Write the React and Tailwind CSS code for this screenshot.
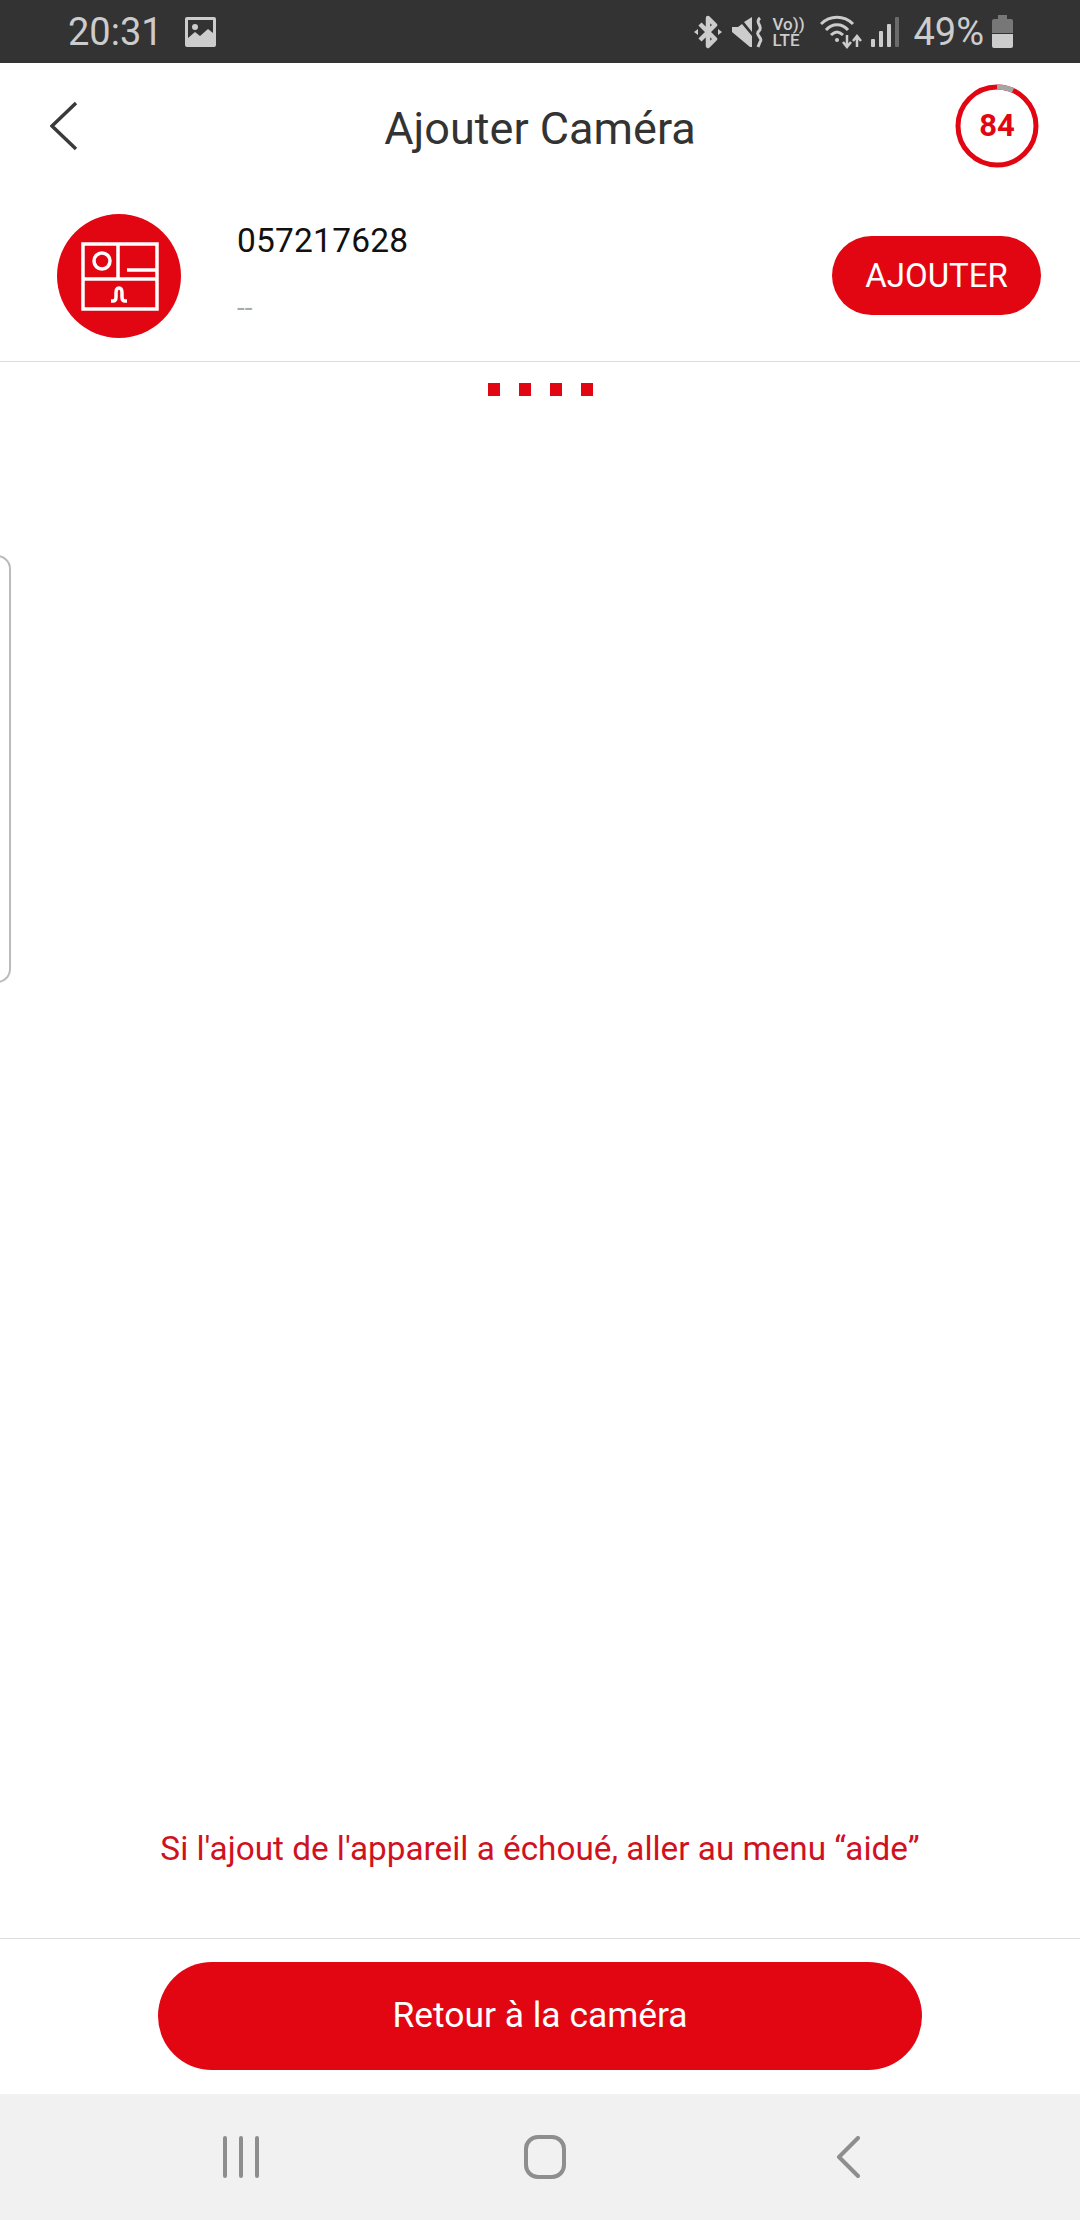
import React from "react";

const StatusIcons = () => (
  <div className="flex items-center text-[#cccccc]">
    {/* bluetooth */}
    <svg width="30" height="34" viewBox="0 0 30 34" fill="none" stroke="#cccccc" strokeWidth="4.5" className="mr-[9px]">
      <path d="M7 9 L22 24 L15 31 V3 L22 10 L7 25" strokeLinejoin="round" />
      <path d="M1 17 L5 14 V20 Z M29 17 L25 14 V20 Z" fill="#cccccc" stroke="none" />
    </svg>
    {/* mute / vibrate */}
    <svg width="32" height="32" viewBox="0 0 32 32" fill="none" className="mr-[8px]">
      <path d="M0 11 H6 L10 8 L20 20 V31 L18 31 L0 16 Z M12 6 L20 1 V16 Z" fill="#cccccc" />
      <path d="M28 2 C22 7 32 10 27 15 C22 19 32 22 28 26 L26 31" stroke="#cccccc" strokeWidth="3" />
    </svg>
    {/* volte */}
    <div className="w-[33px] h-[32px] mr-[15px] flex flex-col items-start font-['Roboto',sans-serif] font-medium text-[17px] leading-[16px]">
      <span>Vo))</span>
      <span>LTE</span>
    </div>
    {/* wifi */}
    <svg width="42" height="34" viewBox="0 0 42 34" fill="none" stroke="#cccccc" strokeWidth="3" className="mr-[9px]">
      <path d="M1 9 C10 0 24 0 33 9" />
      <path d="M6 15 C12 8 22 8 28 15" />
      <path d="M11 20 C15 16 19 16 23 20" />
      <circle cx="17" cy="25" r="2" fill="#cccccc" stroke="none" />
      <path d="M27 20 V31 M23 27 L27 32 L31 27" strokeWidth="2.5" />
      <path d="M37 32 V22 M33 26 L37 21 L41 26" strokeWidth="2.5" />
    </svg>
    {/* signal */}
    <svg width="28" height="30" viewBox="0 0 28 30" className="mr-[14px]">
      <rect x="0" y="22" width="4" height="8" rx="1" fill="#cccccc" />
      <rect x="8" y="14" width="4" height="16" rx="1" fill="#cccccc" />
      <rect x="16" y="7" width="4" height="23" rx="1" fill="#cccccc" />
      <rect x="24" y="0" width="4" height="30" rx="1" fill="#6b6b6b" />
    </svg>
    <span className="text-[38px] leading-none font-['Roboto',sans-serif] mr-[8px]">49%</span>
    {/* battery */}
    <svg width="21" height="33" viewBox="0 0 21 33">
      <path d="M6 0 H15 V4 H19 Q21 4 21 6 V18 H0 V6 Q0 4 2 4 H6 Z" fill="#777777" />
      <path d="M0 19 H21 V31 Q21 33 19 33 H2 Q0 33 0 31 Z" fill="#cccccc" />
    </svg>
  </div>
);

const App = () => {
  return (
    <div className="relative w-[1080px] h-[2220px] flex flex-col bg-white overflow-hidden font-['Roboto',sans-serif]">
      {/* Barre d'etat */}
      <div className="h-[63px] shrink-0 bg-[#333333] flex items-center justify-between pl-[68px] pr-[67px]">
        <div className="flex items-center gap-[22px]">
          <span className="text-[38px] leading-none text-[#cccccc]">20:31</span>
          <svg width="31" height="30" viewBox="0 0 31 30">
            <rect width="31" height="30" rx="2" fill="#cccccc" />
            <rect x="3" y="3" width="25" height="20" fill="#333333" />
            <circle cx="10" cy="10" r="3" fill="#cccccc" />
            <path d="M3 24 L3 21 L10 15 L15 19 L23 12 L28 16 L28 24 Z" fill="#cccccc" />
          </svg>
        </div>
        <StatusIcons />
      </div>

      {/* Entete */}
      <div className="h-[127px] shrink-0 flex items-center justify-between pl-[50px] pr-[41px] relative">
        <svg width="28" height="50" viewBox="0 0 28 50" fill="none" stroke="#3a3a3a" strokeWidth="3.5" className="-mt-[2px]">
          <path d="M26 2 L2 25 L26 48" />
        </svg>
        <h1 className="absolute left-0 right-0 top-[43px] text-center text-[45px] leading-none text-[#333333] font-normal">Ajouter Caméra</h1>
        <div className="relative w-[84px] h-[84px] -mt-[2px] flex items-center justify-center">
          <svg width="84" height="84" viewBox="0 0 84 84" className="absolute inset-0" fill="none" strokeWidth="5">
            <circle cx="42" cy="42" r="39" stroke="#e20613" />
            <path d="M42 3 A39 39 0 0 1 58 6.4" stroke="#a5a5a5" />
          </svg>
          <span className="text-[31px] leading-none font-bold text-[#e20613]">84</span>
        </div>
      </div>

      {/* Appareil */}
      <div className="h-[172px] shrink-0 border-b border-[#dddddd] flex items-center pl-[57px] pr-[39px]">
        <div className="w-[124px] h-[124px] rounded-full bg-[#e20613] shrink-0">
          <svg width="124" height="124" viewBox="0 0 124 124" fill="none" stroke="#ffffff" strokeWidth="3.5">
            <rect x="26" y="30" width="74" height="65" />
            <path d="M26 65 H100 M61 30 V65 M70 56 H99" />
            <circle cx="45" cy="47" r="8" />
            <path d="M54 87 H56 Q59 87 59 83 V79 Q59 74 62 74 Q65 74 65 79 V83 Q65 87 68 87 H70" />
          </svg>
        </div>
        <div className="ml-[56px] flex-1 -mt-[10px]">
          <p className="text-[33.5px] leading-[40px] text-[#111111] tracking-[0.2px]">057217628</p>
          <p className="text-[28px] leading-[24px] mt-[35px] text-[#aaaaaa]">--</p>
        </div>
        <button className="w-[209px] h-[79px] rounded-full bg-[#e20613] text-white text-[33px] pt-[1px]">AJOUTER</button>
      </div>

      {/* Chargement */}
      <div className="flex justify-center gap-[19px] pt-[21px]">
        <span className="w-[12px] h-[13px] bg-[#e20613]" />
        <span className="w-[12px] h-[13px] bg-[#e20613]" />
        <span className="w-[12px] h-[13px] bg-[#e20613]" />
        <span className="w-[12px] h-[13px] bg-[#e20613]" />
      </div>

      {/* Panneau lateral replie */}
      <div className="absolute left-[-20px] top-[555px] w-[31px] h-[428px] border-2 border-[#bbbbbb] rounded-[14px]" />

      <div className="flex-1" />

      {/* Message */}
      <p className="text-center text-[33.3px] leading-[40px] text-[#d0121f] pb-[69px]">Si l'ajout de l'appareil a échoué, aller au menu “aide”</p>

      {/* Bouton */}
      <div className="h-[156px] shrink-0 border-t border-[#dddddd] flex justify-center pt-[23px]">
        <button className="w-[764px] h-[108px] rounded-full bg-[#e20613] text-white text-[35.4px]">Retour à la caméra</button>
      </div>

      {/* Navigation */}
      <div className="h-[126px] shrink-0 bg-[#f1f1f1] relative flex items-center justify-between pl-[222px] pr-[220px]">
        <svg width="38" height="42" viewBox="0 0 38 42" stroke="#8e8e8e" strokeWidth="4" strokeLinecap="round">
          <path d="M3 2 V40 M19 2 V40 M35 2 V40" />
        </svg>
        <svg width="44" height="44" viewBox="0 0 44 44" fill="none" stroke="#8e8e8e" strokeWidth="4" className="-ml-[6px]">
          <rect x="3" y="2" width="38" height="40" rx="12" />
        </svg>
        <svg width="24" height="42" viewBox="0 0 24 42" fill="none" stroke="#8e8e8e" strokeWidth="4" strokeLinecap="round" strokeLinejoin="round">
          <path d="M22 2 L3 21 L22 40" />
        </svg>
      </div>
    </div>
  );
};

export default App;
